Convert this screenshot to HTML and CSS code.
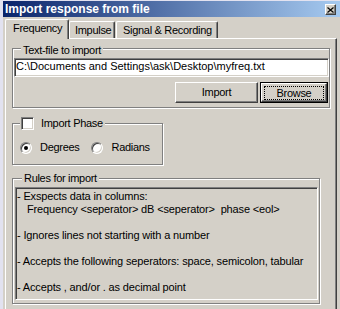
FILE: index.html
```html
<!DOCTYPE html>
<html>
<head>
<meta charset="utf-8">
<link rel="stylesheet" href="styles.css">
</head>
<body>
<div class="window">
  <div class="titlebar">
    <span class="title">Import response from file</span>
    <span class="close"><svg width="7" height="6" viewBox="0 0 7 6"><path d="M0.5 0.5 L6.5 5.5 M6.5 0.5 L0.5 5.5" stroke="#000" stroke-width="1.2" fill="none"/></svg></span>
  </div>
  <div class="tabs">
    <div class="tab tab-active tab-freq">Frequency</div>
    <div class="tab tab-imp">Impulse</div>
    <div class="tab tab-sig">Signal &amp; Recording</div>
  </div>
  <div class="panel">
    <div class="group g-file">
      <div class="legend legend-file">Text-file to import</div>
      <div class="input">C:\Documents and Settings\ask\Desktop\myfreq.txt</div>
      <div class="buttons">
        <div class="btn btn-import">Import</div>
        <div class="btn-default"><div class="btn-face"><div class="focus">Browse</div></div></div>
      </div>
    </div>
    <div class="group g-phase">
      <div class="legend legend-check"><span class="checkbox"></span><span class="check-label">Import Phase</span></div>
      <div class="radios">
        <span class="radio radio-on"><span class="dot"></span></span><span class="radio-label">Degrees</span>
        <span class="radio radio-2"></span><span class="radio-label">Radians</span>
      </div>
    </div>
    <div class="group g-rules">
      <div class="legend legend-rules">Rules for import</div>
      <div class="rules">
        <div class="line">- Exspects data in columns:</div>
        <div class="line indent">Frequency &lt;seperator&gt; dB &lt;seperator&gt;  phase &lt;eol&gt;</div>
        <div class="line"> </div>
        <div class="line">- Ignores lines not starting with a number</div>
        <div class="line"> </div>
        <div class="line">- Accepts the following seperators: space, semicolon, tabular</div>
        <div class="line"> </div>
        <div class="line">- Accepts , and/or . as decimal point</div>
      </div>
    </div>
  </div>
</div>
</body>
</html>
```
FILE: styles.css
```css
* { box-sizing: border-box; margin: 0; padding: 0; }
html, body { width: 340px; height: 309px; overflow: hidden; }
body {
  background: #d4d0c8;
  font-family: "Liberation Sans", Arial, sans-serif;
  font-size: 11px;
  line-height: 13px;
  color: #000;
}
.window {
  height: 309px;
  border-left: 3px solid #e2e2f0;
  border-top: 1px solid #e2e2f0;
  background: #d4d0c8;
  display: flex;
  flex-direction: column;
}
.titlebar {
  height: 16px;
  flex: none;
  background: linear-gradient(to right, #0a246a, #a6caf0);
  display: flex;
  align-items: flex-start;
  justify-content: space-between;
  padding: 0 4px 0 2px;
}
.title {
  color: #fff;
  font-weight: bold;
  font-size: 12px;
  line-height: 17px;
}
.close {
  margin-top: 3px;
  width: 11px;
  height: 11px;
  background: #d4d0c8;
  border-top: 1px solid #fff;
  border-left: 1px solid #fff;
  border-right: 1px solid #404040;
  border-bottom: 1px solid #404040;
  box-shadow: inset -1px -1px #808080;
  display: flex;
  align-items: center;
  justify-content: center;
}
.close svg { display: block; }
.tabs {
  flex: none;
  height: 21px;
  display: flex;
  align-items: flex-end;
  padding-left: 2px;
}
.tab {
  height: 17px;
  padding-top: 2px;
  border-top: 1px solid #fff;
  border-left: 1px solid #fff;
  border-right: 1px solid #404040;
  box-shadow: inset -1px 0 #808080;
  border-radius: 2px 2px 0 0;
  letter-spacing: -0.3px;
  white-space: nowrap;
  background: #d4d0c8;
}
.tab-active {
  position: relative;
  z-index: 1;
  height: 20px;
  margin-bottom: -1px;
}
.tab-freq { width: 64px; padding-left: 7px; }
.tab-imp { width: 46px; padding-left: 5px; }
.tab-sig { width: 102px; padding-left: 6px; margin-left: 1px; }
.panel {
  flex: 1;
  margin-left: 2px;
  width: 332px;
  border-top: 1px solid #fff;
  border-left: 1px solid #fff;
  border-right: 1px solid #404040;
  box-shadow: inset -1px 0 #808080;
  padding: 9px 0 0 6px;
}
.group {
  border: 1px solid #808080;
  box-shadow: inset 1px 1px #fff, 1px 1px #fff;
}
.legend {
  width: max-content;
  background: #d4d0c8;
  padding: 0 2px;
  height: 13px;
  letter-spacing: -0.3px;
  white-space: nowrap;
}
.g-file { width: 318px; height: 60px; }
.legend-file { margin: -5px 0 0 8px; }
.input {
  margin: 1px 0 0 1px;
  width: 315px;
  height: 19px;
  background: #fff;
  border-top: 1px solid #808080;
  border-left: 1px solid #808080;
  border-bottom: 1px solid #fff;
  border-right: 1px solid #fff;
  box-shadow: inset 1px 1px #404040, inset -1px -1px #d4d0c8;
  padding: 1px 0 0 1px;
  white-space: nowrap;
  overflow: hidden;
}
.buttons {
  margin-top: 5px;
  height: 21px;
  display: flex;
  justify-content: flex-end;
  gap: 2px;
  padding-right: 1px;
}
.btn {
  width: 83px;
  height: 21px;
  border-top: 1px solid #fff;
  border-left: 1px solid #fff;
  border-right: 1px solid #404040;
  border-bottom: 1px solid #404040;
  box-shadow: inset -1px -1px #808080;
  display: flex;
  align-items: center;
  justify-content: center;
  letter-spacing: -0.3px;
}
.btn-default {
  width: 68px;
  height: 21px;
  border: 1px solid #000;
}
.btn-face {
  height: 100%;
  border-top: 1px solid #fff;
  border-left: 1px solid #fff;
  border-right: 1px solid #404040;
  border-bottom: 1px solid #404040;
  box-shadow: inset -1px -1px #808080;
  padding: 2px 2px 1px 2px;
}
.focus {
  height: 100%;
  border: 1px dotted #000;
  display: flex;
  align-items: center;
  justify-content: center;
  letter-spacing: -0.3px;
}
.g-phase { width: 151px; height: 42px; margin-top: 15px; }
.legend-check {
  margin: -7px 0 0 7px;
  padding: 0 2px 0 1px;
  display: flex;
  align-items: center;
}
.checkbox {
  width: 13px;
  height: 13px;
  background: #fff;
  border-top: 1px solid #808080;
  border-left: 1px solid #808080;
  border-bottom: 1px solid #fff;
  border-right: 1px solid #fff;
  box-shadow: inset 1px 1px #404040, inset -1px -1px #d4d0c8;
}
.check-label { margin-left: 7px; }
.radios {
  margin-top: 11px;
  height: 13px;
  display: flex;
  align-items: center;
  padding-left: 7px;
  letter-spacing: -0.3px;
}
.radio {
  width: 12px;
  height: 12px;
  border-radius: 50%;
  background: #fff;
  border: 1px solid;
  border-color: #808080 #fff #fff #808080;
  box-shadow: inset 1px 1px #404040, inset -1px -1px #d4d0c8;
  display: flex;
  align-items: center;
  justify-content: center;
}
.dot {
  width: 4px;
  height: 4px;
  border-radius: 50%;
  background: #000;
}
.radio-label { margin-left: 8px; }
.radio-2 { margin-left: 12px; }
.g-rules { width: 308px; height: 126px; margin-top: 13px; }
.legend-rules { margin: -7px 0 0 9px; }
.rules {
  margin: 2px 1px 0 2px;
  height: 113px;
  border-top: 1px solid #808080;
  border-left: 1px solid #808080;
  border-bottom: 1px solid #fff;
  border-right: 1px solid #fff;
  box-shadow: inset 1px 1px #404040, inset -1px -1px #d4d0c8;
  padding: 2px 0 0 1px;
  letter-spacing: -0.15px;
}
.line { height: 13px; white-space: pre; }
.indent { padding-left: 10px; }
```
